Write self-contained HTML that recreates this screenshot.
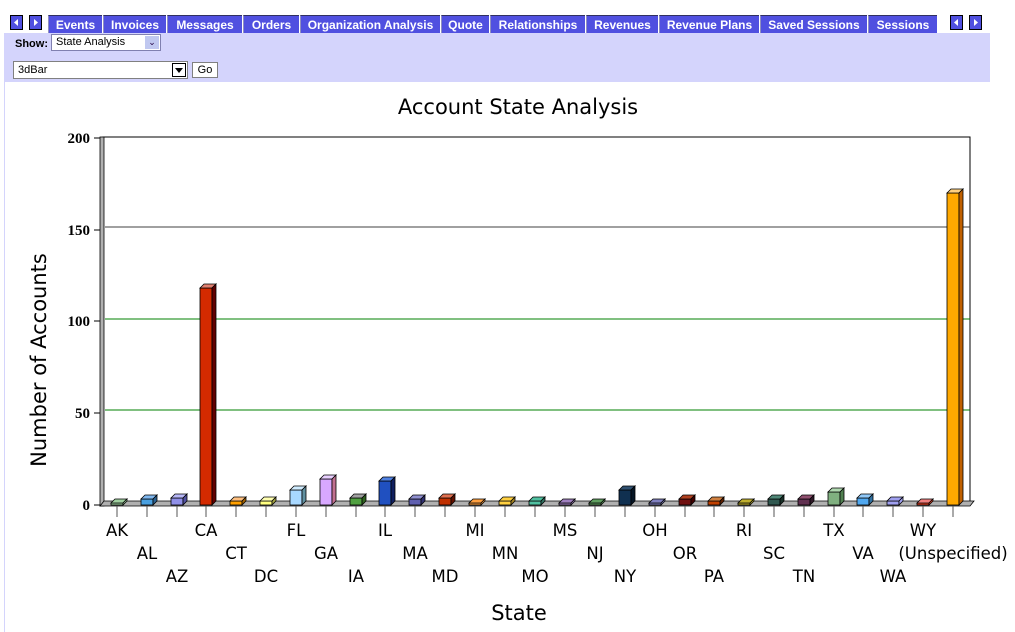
<!DOCTYPE html>
<html><head><meta charset="utf-8"><style>
body{margin:0;width:1015px;height:632px;background:#fff;position:relative;overflow:hidden;font-family:"Liberation Sans",sans-serif}
.tab{position:absolute;top:15px;height:18px;background:#5050e0;color:#fff;font-weight:bold;font-size:12px;line-height:18px;text-align:center;border-left:1px solid #9090c0;border-top:1px solid #303060;box-sizing:border-box}
.arr{position:absolute;top:15px;width:13px;height:15px;background:#5050e0;border:1px solid #000;box-sizing:border-box}
.panel{position:absolute;left:4px;top:33px;width:986px;height:49px;background:#d4d4fc}
</style></head><body>
<div class="arr" style="left:10px"><svg width="11" height="13"><polygon points="7,3 3,6.5 7,10" fill="#fff"/></svg></div>
<div class="arr" style="left:29px"><svg width="11" height="13"><polygon points="4,3 8,6.5 4,10" fill="#fff"/></svg></div>
<div class="tab" style="left:48px;width:54px">Events</div>
<div class="tab" style="left:103px;width:63px">Invoices</div>
<div class="tab" style="left:167px;width:75px">Messages</div>
<div class="tab" style="left:243px;width:56px">Orders</div>
<div class="tab" style="left:300px;width:140px">Organization Analysis</div>
<div class="tab" style="left:441px;width:48px">Quote</div>
<div class="tab" style="left:490px;width:95px">Relationships</div>
<div class="tab" style="left:586px;width:72px">Revenues</div>
<div class="tab" style="left:659px;width:100px">Revenue Plans</div>
<div class="tab" style="left:760px;width:107px">Saved Sessions</div>
<div class="tab" style="left:868px;width:69px">Sessions</div>
<div class="arr" style="left:950px"><svg width="11" height="13"><polygon points="7,3 3,6.5 7,10" fill="#fff"/></svg></div>
<div class="arr" style="left:969px"><svg width="11" height="13"><polygon points="4,3 8,6.5 4,10" fill="#fff"/></svg></div>
<div class="panel"></div>
<div style="position:absolute;left:4px;top:82px;width:1px;height:550px;background:#d4d4fc"></div>
<div style="position:absolute;left:15px;top:38px;font-size:11px;font-weight:bold">Show:</div>
<div style="position:absolute;left:51px;top:34px;width:110px;height:17px;background:#fff;border:1px solid #8080b0;box-sizing:border-box;font-size:11px;line-height:15px;padding-left:4px">State Analysis<span style="position:absolute;right:1px;top:1px;width:14px;height:13px;background:#c0c8f0;font-size:9px;line-height:13px;text-align:center;color:#204">&#8964;</span></div>
<div style="position:absolute;left:13px;top:61px;width:175px;height:18px;background:#fff;border:1px solid #808080;box-sizing:border-box;font-size:11px;line-height:16px;padding-left:4px">3dBar<span style="position:absolute;right:1px;top:1px;width:14px;height:14px;background:#fff;border:1px solid #000;box-sizing:border-box"><svg width="12" height="12" style="position:absolute;left:0;top:0"><polygon points="2,4 10,4 6,9" fill="#000"/></svg></span></div>
<div style="position:absolute;left:192px;top:62px;width:26px;height:16px;background:#fff;border:1px solid #808080;box-sizing:border-box;font-size:11px;line-height:14px;text-align:center">Go</div>
<svg style="position:absolute;left:0;top:0" width="1015" height="632" font-family="DejaVu Sans, sans-serif">
<text x="518" y="114" font-size="21" text-anchor="middle">Account State Analysis</text>
<text transform="translate(46,360) rotate(-90)" font-size="21" text-anchor="middle">Number of Accounts</text>
<text x="519" y="620" font-size="21" text-anchor="middle">State</text>
<g font-family="Liberation Serif, serif" font-size="15" font-weight="bold" text-anchor="end">
<text x="90" y="143">200</text><text x="90" y="235">150</text><text x="90" y="326">100</text><text x="90" y="418">50</text><text x="90" y="510">0</text></g>
<rect x="103" y="137" width="867" height="368" fill="none" stroke="#000"/>
<g stroke="#008000"><line x1="105" y1="227" x2="970" y2="227" stroke="#404040"/><line x1="105" y1="319" x2="970" y2="319"/><line x1="105" y1="410" x2="970" y2="410"/></g>
<g stroke="#000"><line x1="94" y1="138" x2="101" y2="138"/><line x1="94" y1="230" x2="101" y2="230"/><line x1="94" y1="321" x2="101" y2="321"/><line x1="94" y1="413" x2="101" y2="413"/><line x1="94" y1="505" x2="101" y2="505"/></g>
<rect x="100" y="137" width="4" height="369" fill="#b0b0b0" stroke="#000" stroke-width="0.8"/>
<polygon points="100,506 104,501 974,501 970,506" fill="#b0b0b0" stroke="#000" stroke-width="0.8"/>
<g stroke="#555"><line x1="117" y1="506" x2="117" y2="517"/><line x1="147" y1="506" x2="147" y2="517"/><line x1="177" y1="506" x2="177" y2="517"/><line x1="206" y1="506" x2="206" y2="517"/><line x1="236" y1="506" x2="236" y2="517"/><line x1="266" y1="506" x2="266" y2="517"/><line x1="296" y1="506" x2="296" y2="517"/><line x1="326" y1="506" x2="326" y2="517"/><line x1="356" y1="506" x2="356" y2="517"/><line x1="385" y1="506" x2="385" y2="517"/><line x1="415" y1="506" x2="415" y2="517"/><line x1="445" y1="506" x2="445" y2="517"/><line x1="475" y1="506" x2="475" y2="517"/><line x1="505" y1="506" x2="505" y2="517"/><line x1="535" y1="506" x2="535" y2="517"/><line x1="565" y1="506" x2="565" y2="517"/><line x1="595" y1="506" x2="595" y2="517"/><line x1="625" y1="506" x2="625" y2="517"/><line x1="655" y1="506" x2="655" y2="517"/><line x1="685" y1="506" x2="685" y2="517"/><line x1="714" y1="506" x2="714" y2="517"/><line x1="744" y1="506" x2="744" y2="517"/><line x1="774" y1="506" x2="774" y2="517"/><line x1="804" y1="506" x2="804" y2="517"/><line x1="834" y1="506" x2="834" y2="517"/><line x1="863" y1="506" x2="863" y2="517"/><line x1="893" y1="506" x2="893" y2="517"/><line x1="923" y1="506" x2="923" y2="517"/><line x1="953" y1="506" x2="953" y2="517"/></g>
<g stroke="#000" stroke-width="0.8">
<g transform="translate(111,505)" fill="#a0d0a0"><rect x="0" y="-2" width="12" height="2"/><polygon points="0,-2 4,-6 16,-6 12,-2"/><polygon points="12,-2 16,-6 16,-4 12,0"/></g>
<g transform="translate(141,505)" fill="#4aa0e0"><rect x="0" y="-6" width="12" height="6"/><polygon points="0,-6 4,-10 16,-10 12,-6" fill="#80b8f0"/><polygon points="12,-6 16,-10 16,-4 12,0" fill="#2a6090"/></g>
<g transform="translate(171,505)" fill="#9090e8"><rect x="0" y="-7" width="12" height="7"/><polygon points="0,-7 4,-11 16,-11 12,-7" fill="#b8b8f8"/><polygon points="12,-7 16,-11 16,-4 12,0" fill="#5050a0"/></g>
<g transform="translate(200,505)" fill="#d42a00"><rect x="0" y="-217" width="12" height="217"/><polygon points="0,-217 4,-221 16,-221 12,-217" fill="#e08070"/><polygon points="12,-217 16,-221 16,-4 12,0" fill="#600000"/></g>
<g transform="translate(230,505)" fill="#ffa000"><rect x="0" y="-4" width="12" height="4"/><polygon points="0,-4 4,-8 16,-8 12,-4" fill="#ffc080"/><polygon points="12,-4 16,-8 16,-4 12,0" fill="#a06000"/></g>
<g transform="translate(260,505)" fill="#ffff80"><rect x="0" y="-4" width="12" height="4"/><polygon points="0,-4 4,-8 16,-8 12,-4" fill="#ffffb0"/><polygon points="12,-4 16,-8 16,-4 12,0" fill="#a0a040"/></g>
<g transform="translate(290,505)" fill="#a8d8ff"><rect x="0" y="-15" width="12" height="15"/><polygon points="0,-15 4,-19 16,-19 12,-15" fill="#d0ecff"/><polygon points="12,-15 16,-19 16,-4 12,0" fill="#6090a0"/></g>
<g transform="translate(320,505)" fill="#d8a8ff"><rect x="0" y="-26" width="12" height="26"/><polygon points="0,-26 4,-30 16,-30 12,-26" fill="#e8d0ff"/><polygon points="12,-26 16,-30 16,-4 12,0" fill="#c07090"/></g>
<g transform="translate(350,505)" fill="#50a040"><rect x="0" y="-7" width="12" height="7"/><polygon points="0,-7 4,-11 16,-11 12,-7" fill="#a0a0a0"/><polygon points="12,-7 16,-11 16,-4 12,0" fill="#306020"/></g>
<g transform="translate(379,505)" fill="#2050c0"><rect x="0" y="-24" width="12" height="24"/><polygon points="0,-24 4,-28 16,-28 12,-24" fill="#5080e0"/><polygon points="12,-24 16,-28 16,-4 12,0" fill="#102060"/></g>
<g transform="translate(409,505)" fill="#6060b0"><rect x="0" y="-6" width="12" height="6"/><polygon points="0,-6 4,-10 16,-10 12,-6" fill="#9090d0"/><polygon points="12,-6 16,-10 16,-4 12,0" fill="#303070"/></g>
<g transform="translate(439,505)" fill="#c03000"><rect x="0" y="-7" width="12" height="7"/><polygon points="0,-7 4,-11 16,-11 12,-7" fill="#e07050"/><polygon points="12,-7 16,-11 16,-4 12,0" fill="#601000"/></g>
<g transform="translate(469,505)" fill="#ffa040"><rect x="0" y="-2" width="12" height="2"/><polygon points="0,-2 4,-6 16,-6 12,-2"/><polygon points="12,-2 16,-6 16,-4 12,0"/></g>
<g transform="translate(499,505)" fill="#ffd040"><rect x="0" y="-4" width="12" height="4"/><polygon points="0,-4 4,-8 16,-8 12,-4"/><polygon points="12,-4 16,-8 16,-4 12,0" fill="#a08020"/></g>
<g transform="translate(529,505)" fill="#50c0a0"><rect x="0" y="-4" width="12" height="4"/><polygon points="0,-4 4,-8 16,-8 12,-4"/><polygon points="12,-4 16,-8 16,-4 12,0" fill="#307060"/></g>
<g transform="translate(559,505)" fill="#a080c0"><rect x="0" y="-2" width="12" height="2"/><polygon points="0,-2 4,-6 16,-6 12,-2"/><polygon points="12,-2 16,-6 16,-4 12,0"/></g>
<g transform="translate(589,505)" fill="#60a060"><rect x="0" y="-2" width="12" height="2"/><polygon points="0,-2 4,-6 16,-6 12,-2"/><polygon points="12,-2 16,-6 16,-4 12,0"/></g>
<g transform="translate(619,505)" fill="#103050"><rect x="0" y="-15" width="12" height="15"/><polygon points="0,-15 4,-19 16,-19 12,-15" fill="#305070"/><polygon points="12,-15 16,-19 16,-4 12,0" fill="#051525"/></g>
<g transform="translate(649,505)" fill="#8080c0"><rect x="0" y="-2" width="12" height="2"/><polygon points="0,-2 4,-6 16,-6 12,-2"/><polygon points="12,-2 16,-6 16,-4 12,0"/></g>
<g transform="translate(679,505)" fill="#701010"><rect x="0" y="-6" width="12" height="6"/><polygon points="0,-6 4,-10 16,-10 12,-6" fill="#b04020"/><polygon points="12,-6 16,-10 16,-4 12,0" fill="#400000"/></g>
<g transform="translate(708,505)" fill="#c04000"><rect x="0" y="-4" width="12" height="4"/><polygon points="0,-4 4,-8 16,-8 12,-4" fill="#d08040"/><polygon points="12,-4 16,-8 16,-4 12,0" fill="#602000"/></g>
<g transform="translate(738,505)" fill="#c0b030"><rect x="0" y="-2" width="12" height="2"/><polygon points="0,-2 4,-6 16,-6 12,-2"/><polygon points="12,-2 16,-6 16,-4 12,0"/></g>
<g transform="translate(768,505)" fill="#305850"><rect x="0" y="-6" width="12" height="6"/><polygon points="0,-6 4,-10 16,-10 12,-6" fill="#508878"/><polygon points="12,-6 16,-10 16,-4 12,0" fill="#183028"/></g>
<g transform="translate(798,505)" fill="#603050"><rect x="0" y="-6" width="12" height="6"/><polygon points="0,-6 4,-10 16,-10 12,-6" fill="#905070"/><polygon points="12,-6 16,-10 16,-4 12,0" fill="#301828"/></g>
<g transform="translate(828,505)" fill="#80b080"><rect x="0" y="-13" width="12" height="13"/><polygon points="0,-13 4,-17 16,-17 12,-13" fill="#b0d8b0"/><polygon points="12,-13 16,-17 16,-4 12,0" fill="#508050"/></g>
<g transform="translate(857,505)" fill="#50a8f0"><rect x="0" y="-7" width="12" height="7"/><polygon points="0,-7 4,-11 16,-11 12,-7" fill="#90c8f8"/><polygon points="12,-7 16,-11 16,-4 12,0" fill="#3070a0"/></g>
<g transform="translate(887,505)" fill="#a0a0f0"><rect x="0" y="-4" width="12" height="4"/><polygon points="0,-4 4,-8 16,-8 12,-4"/><polygon points="12,-4 16,-8 16,-4 12,0"/></g>
<g transform="translate(917,505)" fill="#f04020"><rect x="0" y="-2" width="12" height="2"/><polygon points="0,-2 4,-6 16,-6 12,-2" fill="#f08080"/><polygon points="12,-2 16,-6 16,-4 12,0"/></g>
<g transform="translate(947,505)" fill="#ffa800"><rect x="0" y="-312" width="12" height="312"/><polygon points="0,-312 4,-316 16,-316 12,-312" fill="#ffd080"/><polygon points="12,-312 16,-316 16,-4 12,0" fill="#c06000"/></g>
</g>
<g font-size="16.5" text-anchor="middle">
<text x="117" y="536">AK</text><text x="147" y="559">AL</text><text x="177" y="582">AZ</text>
<text x="206" y="536">CA</text><text x="236" y="559">CT</text><text x="266" y="582">DC</text>
<text x="296" y="536">FL</text><text x="326" y="559">GA</text><text x="356" y="582">IA</text>
<text x="385" y="536">IL</text><text x="415" y="559">MA</text><text x="445" y="582">MD</text>
<text x="475" y="536">MI</text><text x="505" y="559">MN</text><text x="535" y="582">MO</text>
<text x="565" y="536">MS</text><text x="595" y="559">NJ</text><text x="625" y="582">NY</text>
<text x="655" y="536">OH</text><text x="685" y="559">OR</text><text x="714" y="582">PA</text>
<text x="744" y="536">RI</text><text x="774" y="559">SC</text><text x="804" y="582">TN</text>
<text x="834" y="536">TX</text><text x="863" y="559">VA</text><text x="893" y="582">WA</text>
<text x="923" y="536">WY</text><text x="953" y="559">(Unspecified)</text>
</g>
</svg>
</body></html>
